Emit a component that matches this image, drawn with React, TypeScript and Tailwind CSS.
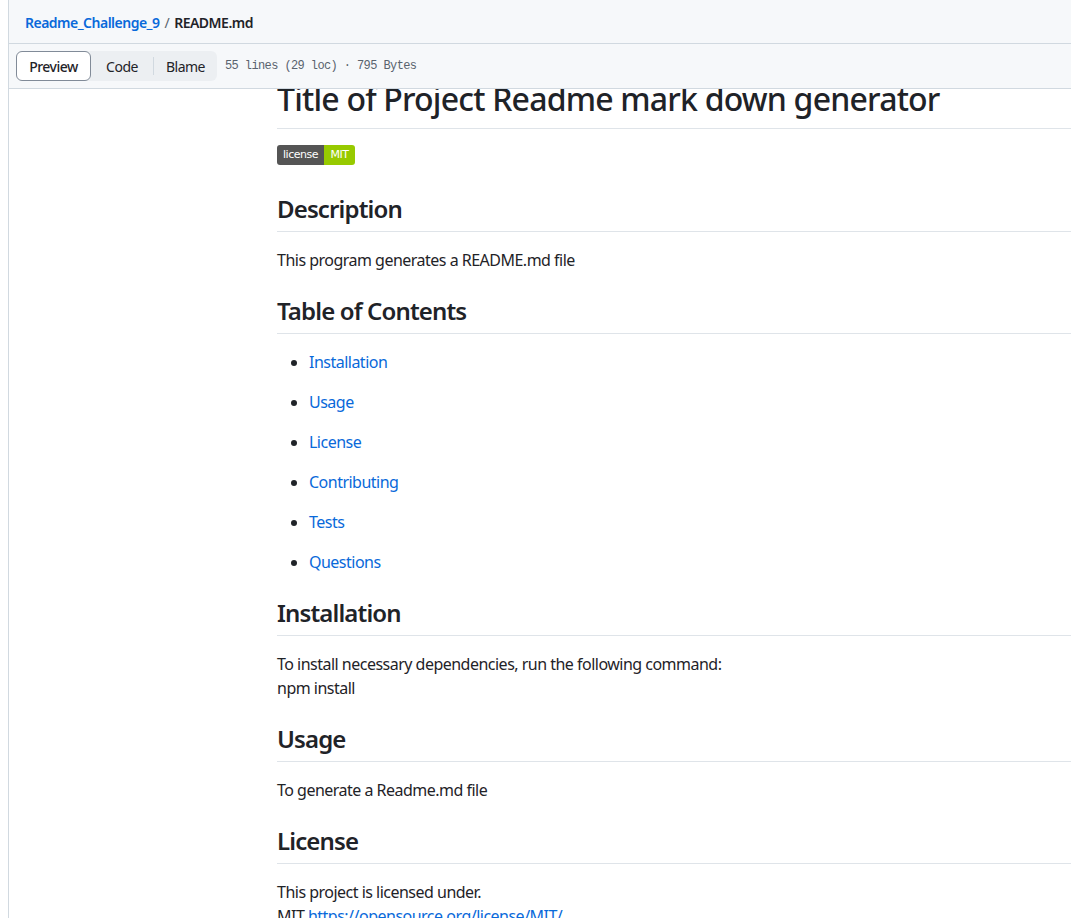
import React from "react";

const font = { fontFamily: '"Noto Sans", "Open Sans", sans-serif' };

function H2({ children }: { children: React.ReactNode }) {
  return (
    <h2 className="mt-6 mb-4 border-b border-[#d1d9e0b3] pb-[7px] text-[24px] leading-[30px] font-semibold tracking-[-0.036em] text-[#1f2328]">
      {children}
    </h2>
  );
}

export default function App() {
  const toc = ["Installation", "Usage", "License", "Contributing", "Tests", "Questions"];
  return (
    <div className="flex h-[918px] overflow-hidden bg-white text-[#1f2328] tracking-[-0.032em]" style={font}>
      <div className="w-[8px] shrink-0" />
      <div className="flex min-w-0 flex-1 flex-col border-l border-[#d1d9e0]">
        <div className="flex h-[44px] shrink-0 items-center border-b border-[#d1d9e0] bg-[#f6f8fa] pl-[16px] pt-[1px] text-[14px]">
          <a className="font-semibold text-[#0969da]">Readme_Challenge_9</a>
          <span className="mx-[5px] text-[#59636e]">/</span>
          <span className="font-semibold">README.md</span>
        </div>
        <div className="relative z-10 flex h-[45px] shrink-0 items-center border-b border-[#d1d9e0] bg-[#f6f8fa] pl-[7px]">
          <div className="flex h-[30px] items-center rounded-[6px] bg-[#eceff2] text-[14px]">
            <div className="flex h-[30px] w-[75px] items-center justify-center rounded-[6px] border border-[#818b98] bg-white font-medium">
              Preview
            </div>
            <div className="flex h-full w-[62px] items-center justify-center">Code</div>
            <div className="h-[18px] w-px bg-[#d1d9e0]" />
            <div className="flex h-full w-[63px] items-center justify-center">Blame</div>
          </div>
          <div
            className="ml-[8px] text-[12px] tracking-[-0.6px] text-[#59636e]"
            style={{ fontFamily: '"Liberation Mono", monospace' }}
          >
            55 lines (29 loc) · 795 Bytes
          </div>
        </div>
        <div className="-mt-[11px] pl-[268px] text-[16px] leading-[24px]">
          <h1 className="mb-4 border-b border-[#d1d9e0b3] pb-[9px] pt-[1px] text-[32px] leading-[40px] font-medium tracking-[-0.025em]">
            Title of Project Readme mark down generator
          </h1>
          <div className="flex h-[25px] items-start">
            <div
              className="flex h-[20px] overflow-hidden rounded-[3px] text-[11px] leading-[20px] text-white"
              style={{ fontFamily: '"DejaVu Sans", sans-serif' }}
            >
              <span className="flex w-[47px] items-center justify-center bg-[#555555] tracking-[-0.5px]">license</span>
              <span className="flex w-[31px] items-center justify-center bg-[#97ca00] tracking-[-0.5px]">MIT</span>
            </div>
          </div>
          <H2>Description</H2>
          <p className="mb-4">This program generates a README.md file</p>
          <H2>Table of Contents</H2>
          <ul className="list-disc pl-[32px]">
            {toc.map((t, i) => (
              <li key={t} className={i === 0 ? "" : "mt-4"}>
                <a className="text-[#0969da]">{t}</a>
              </li>
            ))}
          </ul>
          <H2>Installation</H2>
          <p className="mb-4">
            To install necessary dependencies, run the following command:
            <br />
            npm install
          </p>
          <H2>Usage</H2>
          <p className="mb-4">To generate a Readme.md file</p>
          <H2>License</H2>
          <p className="mb-4">
            This project is licensed under.
            <br />
            MIT <a className="text-[#0969da]">https://opensource.org/license/MIT/</a>
          </p>
        </div>
      </div>
    </div>
  );
}
